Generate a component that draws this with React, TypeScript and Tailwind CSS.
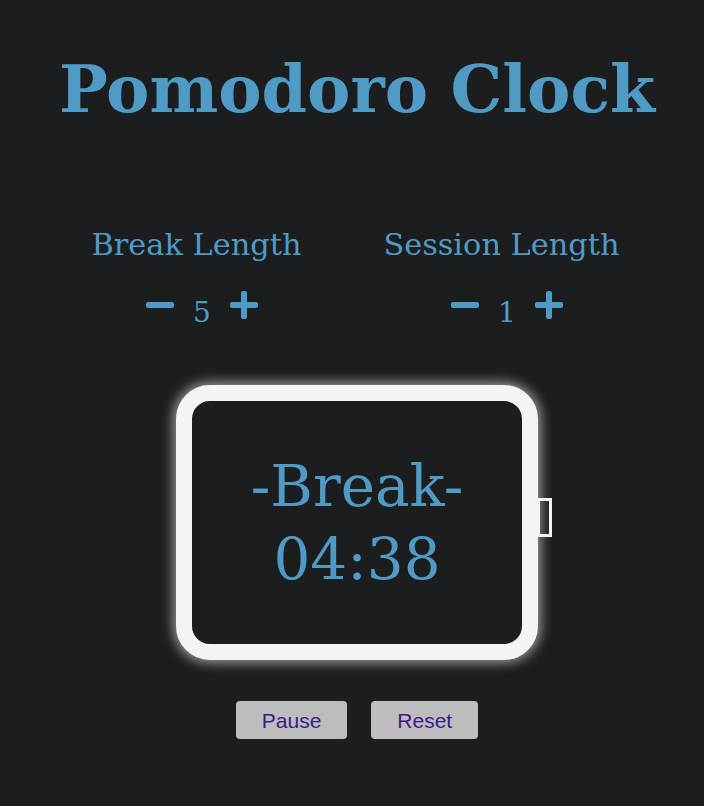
import React from "react";
import { FaMinus, FaPlus } from "react-icons/fa";

const serif = "font-['DejaVu_Serif',serif]";

function Control({ label, value }: { label: string; value: number }) {
  return (
    <div className="flex w-[261px] flex-col items-center">
      <div className={`${serif} text-[30.4px] leading-none text-[#4f9bc5]`}>{label}</div>
      <div className="ml-[11px] mt-[29px] flex h-[32px] items-center gap-[17px] text-[#4f9bc5]">
        <button className="flex items-center justify-center">
          <FaMinus size={32} />
        </button>
        <span className={`${serif} text-[28px] leading-none pt-[16px]`}>{value}</span>
        <button className="flex items-center justify-center">
          <FaPlus size={32} />
        </button>
      </div>
    </div>
  );
}

export default function App() {
  return (
    <div className="flex min-h-[806px] w-full flex-col bg-[#1c1d1f]">
      <h1
        className={`${serif} mt-[57px] pl-[10px] text-center text-[65px] font-bold leading-none text-[#4f9bc5]`}
      >
        Pomodoro Clock
      </h1>

      <div className="mt-[108px] flex gap-[44px] pl-[66px]">
        <Control label="Break Length" value={5} />
        <Control label="Session Length" value={1} />
      </div>

      <div className="mt-[64px] flex justify-center pl-[10px]">
        <div className="relative h-[275px] w-[362px]">
          <div className="flex h-full w-full flex-col items-center justify-center rounded-[34px] border-[16px] border-[#f4f4f4] bg-[#1c1d1f] shadow-[0_0_12px_3px_rgba(255,255,255,0.55)]">
            <div className={`${serif} text-[58px] leading-[73px] text-[#4f9bc5]`}>-Break-</div>
            <div className={`${serif} text-[58px] leading-[73px] text-[#4f9bc5]`}>04:38</div>
          </div>
          <div className="absolute left-[361px] top-[113px] h-[39px] w-[15px] border-[3px] border-[#f4f4f4]" />
        </div>
      </div>

      <div className="mt-[41px] flex justify-center gap-[24px] pl-[10px]">
        <button className="h-[38px] rounded-[4px] bg-[#bdbdbd] px-[26px] font-['Liberation_Sans',sans-serif] text-[21px] text-[#3d1a85]">
          Pause
        </button>
        <button className="h-[38px] rounded-[4px] bg-[#bdbdbd] px-[26px] font-['Liberation_Sans',sans-serif] text-[21px] text-[#3d1a85]">
          Reset
        </button>
      </div>
    </div>
  );
}
